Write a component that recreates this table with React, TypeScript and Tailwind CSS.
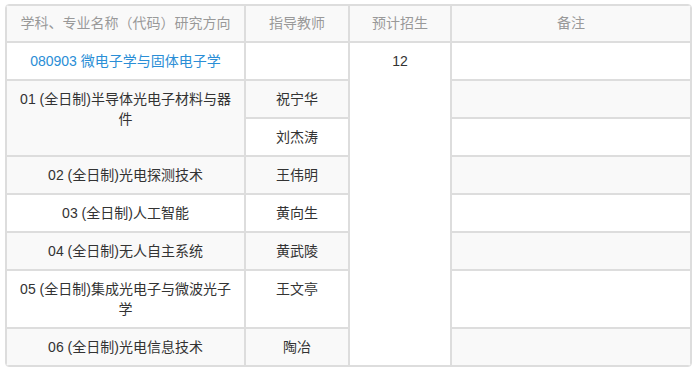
import React from "react";

type Row = {
  direction?: { text: string; rowSpan?: number };
  teacher: string;
  link?: boolean;
};

// enrolment plan for the programme, one entry per table row
const rows: Row[] = [
  { direction: { text: "080903 微电子学与固体电子学" }, teacher: "", link: true },
  { direction: { text: "01 (全日制)半导体光电子材料与器件", rowSpan: 2 }, teacher: "祝宁华" },
  { teacher: "刘杰涛" },
  { direction: { text: "02 (全日制)光电探测技术" }, teacher: "王伟明" },
  { direction: { text: "03 (全日制)人工智能" }, teacher: "黄向生" },
  { direction: { text: "04 (全日制)无人自主系统" }, teacher: "黄武陵" },
  { direction: { text: "05 (全日制)集成光电子与微波光子学" }, teacher: "王文亭" },
  { direction: { text: "06 (全日制)光电信息技术" }, teacher: "陶冶" },
];

const cell = "border border-[#dddddd] px-2 py-2 align-top text-center leading-5";
const head = "border border-[#dddddd] px-2 pt-[7px] pb-2 align-top text-center leading-5 font-normal text-[#999999] bg-[#f9f9f9]";

export default function App() {
  return (
    <div className="min-h-screen bg-white pt-[4px] pl-[5px] text-[14px] text-[#333333] [font-family:'Liberation_Sans','Noto_Sans_CJK_SC',sans-serif]">
      <div className="w-[687px] border border-[#dddddd] rounded-[4px] overflow-hidden">
        <table className="w-[685px] table-fixed border-separate border-spacing-0">
          <thead>
            <tr>
              <th className={`${head} w-[239px]`}>学科、专业名称（代码）研究方向</th>
              <th className={`${head} w-[104px]`}>指导教师</th>
              <th className={`${head} w-[102px]`}>预计招生</th>
              <th className={`${head} w-[240px]`}>备注</th>
            </tr>
          </thead>
          <tbody>
            {rows.map((r, i) => {
              const bg = i % 2 === 1 ? "bg-[#f9f9f9]" : "bg-white";
              return (
                <tr key={i} className={bg}>
                  {r.direction && (
                    <td rowSpan={r.direction.rowSpan} className={`${cell} ${r.link ? "text-[#2a8ed6]" : ""}`}>
                      {r.direction.text}
                    </td>
                  )}
                  <td className={cell}>{r.teacher}</td>
                  {i === 0 && (
                    <td rowSpan={rows.length} className={`${cell} bg-white`}>
                      12
                    </td>
                  )}
                  <td className={cell}></td>
                </tr>
              );
            })}
          </tbody>
        </table>
      </div>
    </div>
  );
}
